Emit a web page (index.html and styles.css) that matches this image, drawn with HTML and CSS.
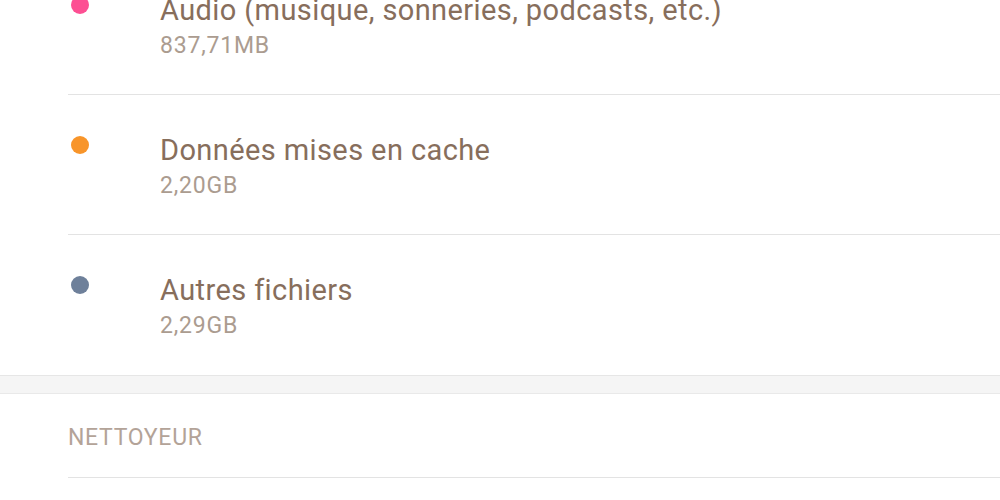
FILE: index.html
```html
<!DOCTYPE html>
<html lang="fr">
<head>
  <meta charset="UTF-8" />
  <title>Stockage</title>
  <link rel="stylesheet" href="styles.css">
</head>
<body>
  <div class="list">
    <div class="item">
      <div class="head"><span class="dot pink"></span><span class="title">Audio (musique, sonneries, podcasts, etc.)</span></div>
      <div class="size">837,71MB</div>
    </div>
    <div class="item">
      <div class="head"><span class="dot orange"></span><span class="title">Données mises en cache</span></div>
      <div class="size">2,20GB</div>
    </div>
    <div class="item last">
      <div class="head"><span class="dot slate"></span><span class="title">Autres fichiers</span></div>
      <div class="size">2,29GB</div>
    </div>
  </div>

  <div class="band"></div>

  <div class="section">
    <div class="section-title">NETTOYEUR</div>
  </div>
</body>
</html>
```

FILE: styles.css
```css
body {
  margin: 0;
  background: #fff;
  font-family: Roboto, "Noto Sans", sans-serif;
  overflow: hidden;
}

.list {
  margin-top: -45px;
}

.item {
  margin-left: 68px;
  padding-top: 39px;
  height: 100px;
  border-bottom: 1px solid #e3e3e3;
}

.item.last {
  border-bottom: none;
  height: 101px;
}

.head {
  display: flex;
  align-items: center;
  height: 32px;
}

.dot {
  width: 18px;
  height: 18px;
  border-radius: 50%;
  margin-left: 3px;
  margin-right: 71px;
  margin-bottom: 11px;
  flex-shrink: 0;
}

.pink { background: #fd4f93; }
.orange { background: #f8952a; }
.slate { background: #6e809a; }

.title {
  font-size: 29px;
  line-height: 32px;
  letter-spacing: 0.4px;
  color: #876e5c;
  white-space: nowrap;
}

.size {
  margin-top: 7px;
  padding-left: 92px;
  font-size: 23px;
  line-height: 26px;
  letter-spacing: 0.8px;
  color: #ab9c90;
}

.band {
  height: 17px;
  background: #f5f5f5;
  border-top: 1px solid #e6e6e6;
  border-bottom: 1px solid #e9e9e9;
}

.section {
  padding-left: 68px;
}

.section-title {
  height: 84px;
  padding-top: 3px;
  box-sizing: border-box;
  display: flex;
  align-items: center;
  font-size: 23px;
  letter-spacing: 0.7px;
  color: #b3a398;
  border-bottom: 1px solid #e3e3e3;
}
```
